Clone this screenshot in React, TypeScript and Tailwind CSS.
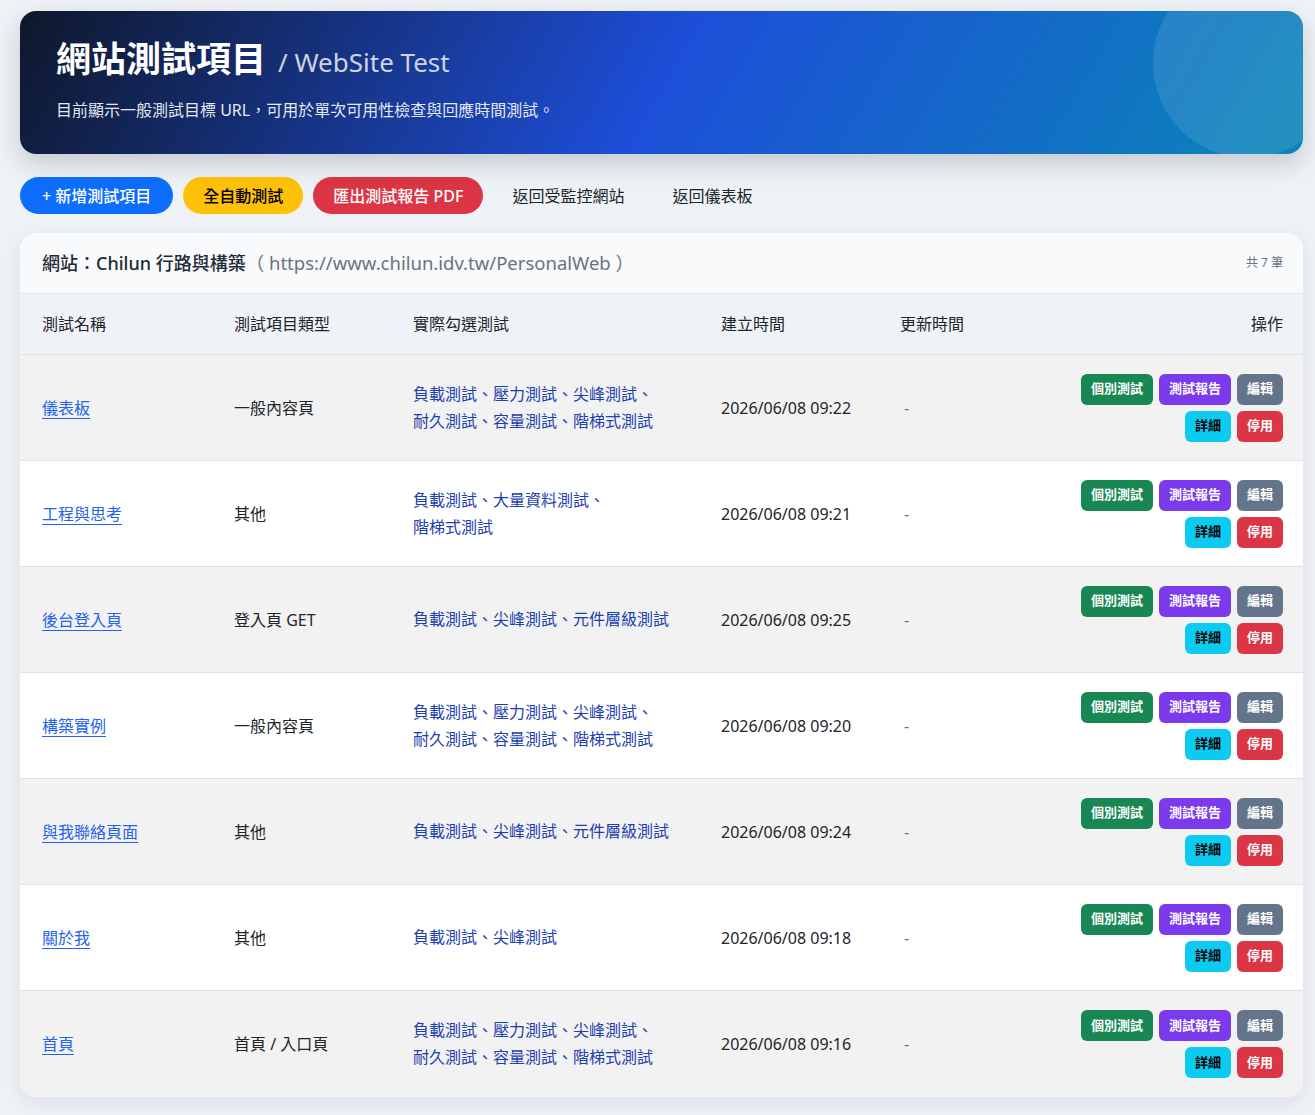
import React from "react";

type Row = {
  name: string;
  type: string;
  tests: string[];
  created: string;
};

const full = ["負載測試", "壓力測試", "尖峰測試", "耐久測試", "容量測試", "階梯式測試"];

const rows: Row[] = [
  { name: "儀表板", type: "一般內容頁", tests: full, created: "2026/06/08 09:22" },
  { name: "工程與思考", type: "其他", tests: ["負載測試", "大量資料測試", "階梯式測試"], created: "2026/06/08 09:21" },
  { name: "後台登入頁", type: "登入頁 GET", tests: ["負載測試", "尖峰測試", "元件層級測試"], created: "2026/06/08 09:25" },
  { name: "構築實例", type: "一般內容頁", tests: full, created: "2026/06/08 09:20" },
  { name: "與我聯絡頁面", type: "其他", tests: ["負載測試", "尖峰測試", "元件層級測試"], created: "2026/06/08 09:24" },
  { name: "關於我", type: "其他", tests: ["負載測試", "尖峰測試"], created: "2026/06/08 09:18" },
  { name: "首頁", type: "首頁 / 入口頁", tests: full, created: "2026/06/08 09:16" },
];

const grid = "grid grid-cols-[192px_179px_308px_179px_1fr] items-center pl-[22px] pr-[20px]";

function ActionBtn({ label, color }: { label: string; color: string }) {
  return (
    <span className={`inline-flex h-[31px] items-center rounded-md px-[10px] text-[13px] font-bold ${color}`}>
      {label}
    </span>
  );
}

export default function App() {
  return (
    <div
      className="min-h-[1115px] bg-[#eef2f6] pl-5 pr-3 pt-[11px] pb-5 text-[#212529]"
      style={{ fontFamily: '"Noto Sans", "Noto Sans CJK TC", sans-serif' }}
    >
      {/* hero */}
      <div className="relative h-[143px] overflow-hidden rounded-2xl bg-[linear-gradient(120deg,#0f172a_0%,#1d4ed8_50%,#0a86b8_100%)] px-9 pt-[30px] shadow-[0_10px_24px_rgba(15,23,42,0.18)]">
        <div className="absolute -right-[40px] -top-[43px] h-[190px] w-[190px] rounded-full bg-white/10" />
        <div className="relative flex items-baseline gap-3">
          <h1 className="text-[35px] font-bold leading-none text-white">網站測試項目</h1>
          <span className="text-[26px] font-normal text-[#cbd5e1]">/ WebSite Test</span>
        </div>
        <p className="relative mt-[16px] text-[16px] text-[#e2e8f0]">
          目前顯示一般測試目標 URL，可用於單次可用性檢查與回應時間測試。
        </p>
      </div>

      {/* toolbar */}
      <div className="mt-[23px] flex items-center gap-2.5">
        <span className="flex h-[37px] items-center rounded-full bg-[#0d6efd] px-[22px] text-[16px] font-medium text-white">+ 新增測試項目</span>
        <span className="flex h-[37px] items-center rounded-full bg-[#ffc107] px-5 text-[16px] font-medium text-black">全自動測試</span>
        <span className="flex h-[37px] items-center rounded-full bg-[#dc3545] px-5 text-[16px] font-medium text-white">匯出測試報告 PDF</span>
        <span className="flex h-[37px] items-center px-[19px] text-[16px] text-[#212529]">返回受監控網站</span>
        <span className="flex h-[37px] items-center px-[19px] text-[16px] text-[#212529]">返回儀表板</span>
      </div>

      {/* card */}
      <div className="mt-[19px] overflow-hidden rounded-2xl bg-white shadow-[0_6px_20px_rgba(15,23,42,0.08)]">
        <div className="flex h-[61px] items-center justify-between border-b border-[#e2e8f0] bg-[#f8fafc] pl-[22px] pr-[20px]">
          <div className="text-[18px]">
            <span className="font-medium text-[#1f2937]">網站：Chilun 行路與構築</span>
            <span className="text-[18.5px] text-[#6b7280]">（ https://www.chilun.idv.tw/PersonalWeb ）</span>
          </div>
          <span className="text-[12px] text-[#6b7280]">共 7 筆</span>
        </div>

        <div className={`${grid} h-[61px] border-b border-[#dee2e6] bg-[#eff3f8] text-[16px] text-[#212529]`}>
          <span>測試名稱</span>
          <span>測試項目類型</span>
          <span>實際勾選測試</span>
          <span>建立時間</span>
          <div className="flex justify-between">
            <span>更新時間</span>
            <span>操作</span>
          </div>
        </div>

        {rows.map((r, i) => (
          <div
            key={r.name}
            className={`${grid} h-[106px] text-[16px] ${i < rows.length - 1 ? "border-b border-[#dee2e6]" : ""} ${i % 2 === 0 ? "bg-[#f2f2f2]" : "bg-white"}`}
          >
            <span className="text-[#2563eb] underline underline-offset-4">{r.name}</span>
            <span>{r.type}</span>
            <span className="pr-[40px] leading-[27px] text-[#1e40af]">
              {r.tests.map((t, j) => (
                <span key={t} className="whitespace-nowrap">
                  {t}
                  {j < r.tests.length - 1 ? "、" : ""}
                </span>
              ))}
            </span>
            <span>{r.created}</span>
            <div className="flex items-center justify-between">
              <span className="pl-[4px] text-[#6b7280]">-</span>
              <div className="flex flex-col items-end gap-1.5">
                <div className="flex gap-1.5">
                  <ActionBtn label="個別測試" color="bg-[#198754] text-white" />
                  <ActionBtn label="測試報告" color="bg-[#7c3aed] text-white" />
                  <ActionBtn label="編輯" color="bg-[#64748b] text-white" />
                </div>
                <div className="flex gap-1.5">
                  <ActionBtn label="詳細" color="bg-[#0dcaf0] text-black" />
                  <ActionBtn label="停用" color="bg-[#dc3545] text-white" />
                </div>
              </div>
            </div>
          </div>
        ))}
      </div>
    </div>
  );
}
